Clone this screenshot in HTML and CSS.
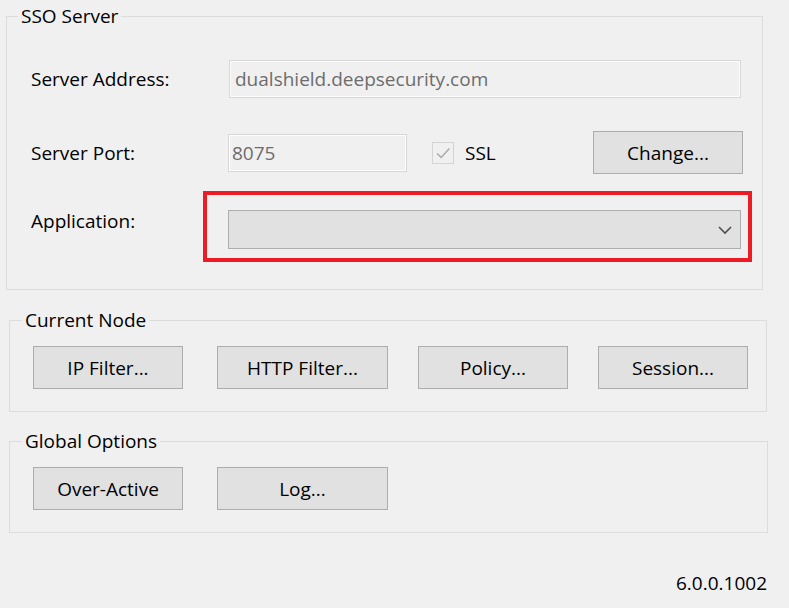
FILE: index.html
```html
<!DOCTYPE html>
<html>
<head>
<meta charset="utf-8">
<link rel="stylesheet" href="styles.css">
</head>
<body>
<div class="page">
  <div class="group sso">
    <span class="group-title">SSO Server</span>
    <div class="row row-addr">
      <span class="label label-wide">Server Address:</span>
      <div class="textbox tb-addr">dualshield.deepsecurity.com</div>
    </div>
    <div class="row row-port">
      <span class="label label-wide2">Server Port:</span>
      <div class="textbox tb-port">8075</div>
      <span class="checkbox"><svg width="22" height="22" viewBox="0 0 22 22"><path d="M4.5 11.5 L9 16 L18 6" fill="none" stroke="#a9a9a9" stroke-width="1.6"/></svg></span>
      <span class="ssl">SSL</span>
      <button class="btn btn-change">Change...</button>
    </div>
    <div class="row row-app">
      <span class="label label-narrow label-app">Application:</span>
      <div class="highlight">
        <div class="combo">
          <svg class="chev" width="16" height="10" viewBox="0 0 16 10"><path d="M2 2 L8 8 L14 2" fill="none" stroke="#505050" stroke-width="1.6"/></svg>
        </div>
      </div>
    </div>
  </div>

  <div class="group node">
    <span class="group-title title-b">Current Node</span>
    <div class="btnrow">
      <button class="btn">IP Filter...</button>
      <button class="btn btn-wide gap34">HTTP Filter...</button>
      <button class="btn gap30">Policy...</button>
      <button class="btn gap30">Session...</button>
    </div>
  </div>

  <div class="group global">
    <span class="group-title title-b">Global Options</span>
    <div class="btnrow">
      <button class="btn">Over-Active</button>
      <button class="btn btn-wide gap34">Log...</button>
    </div>
  </div>

  <div class="version">6.0.0.1002</div>
</div>
</body>
</html>
```

FILE: styles.css
```css
html, body {
  margin: 0;
  padding: 0;
  background: #f0f0f0;
}
body {
  width: 789px;
  height: 608px;
  overflow: hidden;
  font-family: "Open Sans", "Noto Sans", "Liberation Sans", sans-serif;
  font-size: 19px;
  color: #000;
}
.page {
  display: flex;
  flex-direction: column;
  padding-top: 16px;
}
.group {
  position: relative;
  border: 1px solid #dcdcdc;
  box-sizing: border-box;
}
.group-title {
  position: absolute;
  top: -13px;
  left: 11px;
  padding: 0 3px;
  background: #f0f0f0;
  line-height: 24px;
  white-space: nowrap;
}
.title-b { left: 12px; }
.sso {
  margin-left: 6px;
  width: 757px;
  height: 274px;
  padding: 43px 0 0 24px;
  display: flex;
  flex-direction: column;
}
.row {
  display: flex;
  align-items: center;
}
.label {
  flex: none;
}
.label-wide { width: 198px; }
.label-wide2 { width: 197px; }
.label-narrow { width: 172px; }
.row-addr { height: 38px; }
.row-port { height: 43px; margin-top: 33px; }
.row-app { margin-top: 17px; align-items: flex-start; }
.label-app { margin-top: 18px; line-height: 24px; }

.textbox {
  box-sizing: border-box;
  height: 38px;
  border: 1px solid #d7d7d7;
  box-shadow: inset 0 0 0 1px #fdfdfd;
  background: #f0f0f0;
  color: #6d6d6d;
  padding-left: 5px;
  display: flex;
  align-items: center;
}
.tb-addr { width: 512px; }
.tb-port { width: 179px; padding-left: 3px; }

.checkbox {
  box-sizing: border-box;
  width: 22px;
  height: 22px;
  margin-left: 25px;
  border: 1px solid #d4d4d4;
  background: #f0f0f0;
  display: flex;
  align-items: center;
  justify-content: center;
}
.checkbox svg { display: block; }
.ssl {
  margin-left: 11px;
  color: #000;
  width: 128px;
}
.btn {
  box-sizing: border-box;
  width: 150px;
  height: 43px;
  border: 1px solid #adadad;
  background: #e1e1e1;
  font: inherit;
  color: #000;
  padding: 0;
  margin: 0;
}
.btn-wide { width: 171px; }
.gap34 { margin-left: 34px; }
.gap30 { margin-left: 30px; }

.highlight {
  box-sizing: border-box;
  width: 549px;
  height: 71px;
  border: 4px solid #ed1c24;
  padding: 15px 7px 0 21px;
}
.combo {
  box-sizing: border-box;
  height: 39px;
  border: 1px solid #adadad;
  background: #e1e1e1;
  display: flex;
  align-items: center;
  justify-content: flex-end;
  padding-right: 7px;
}
.chev { display: block; }

.node {
  margin-top: 30px;
  margin-left: 9px;
  width: 758px;
  height: 92px;
  padding: 25px 0 0 23px;
}
.global {
  margin-top: 29px;
  margin-left: 9px;
  width: 759px;
  height: 92px;
  padding: 25px 0 0 23px;
}
.btnrow {
  display: flex;
}
.version {
  width: 767px;
  text-align: right;
  margin-top: 38px;
  line-height: 24px;
}
```
